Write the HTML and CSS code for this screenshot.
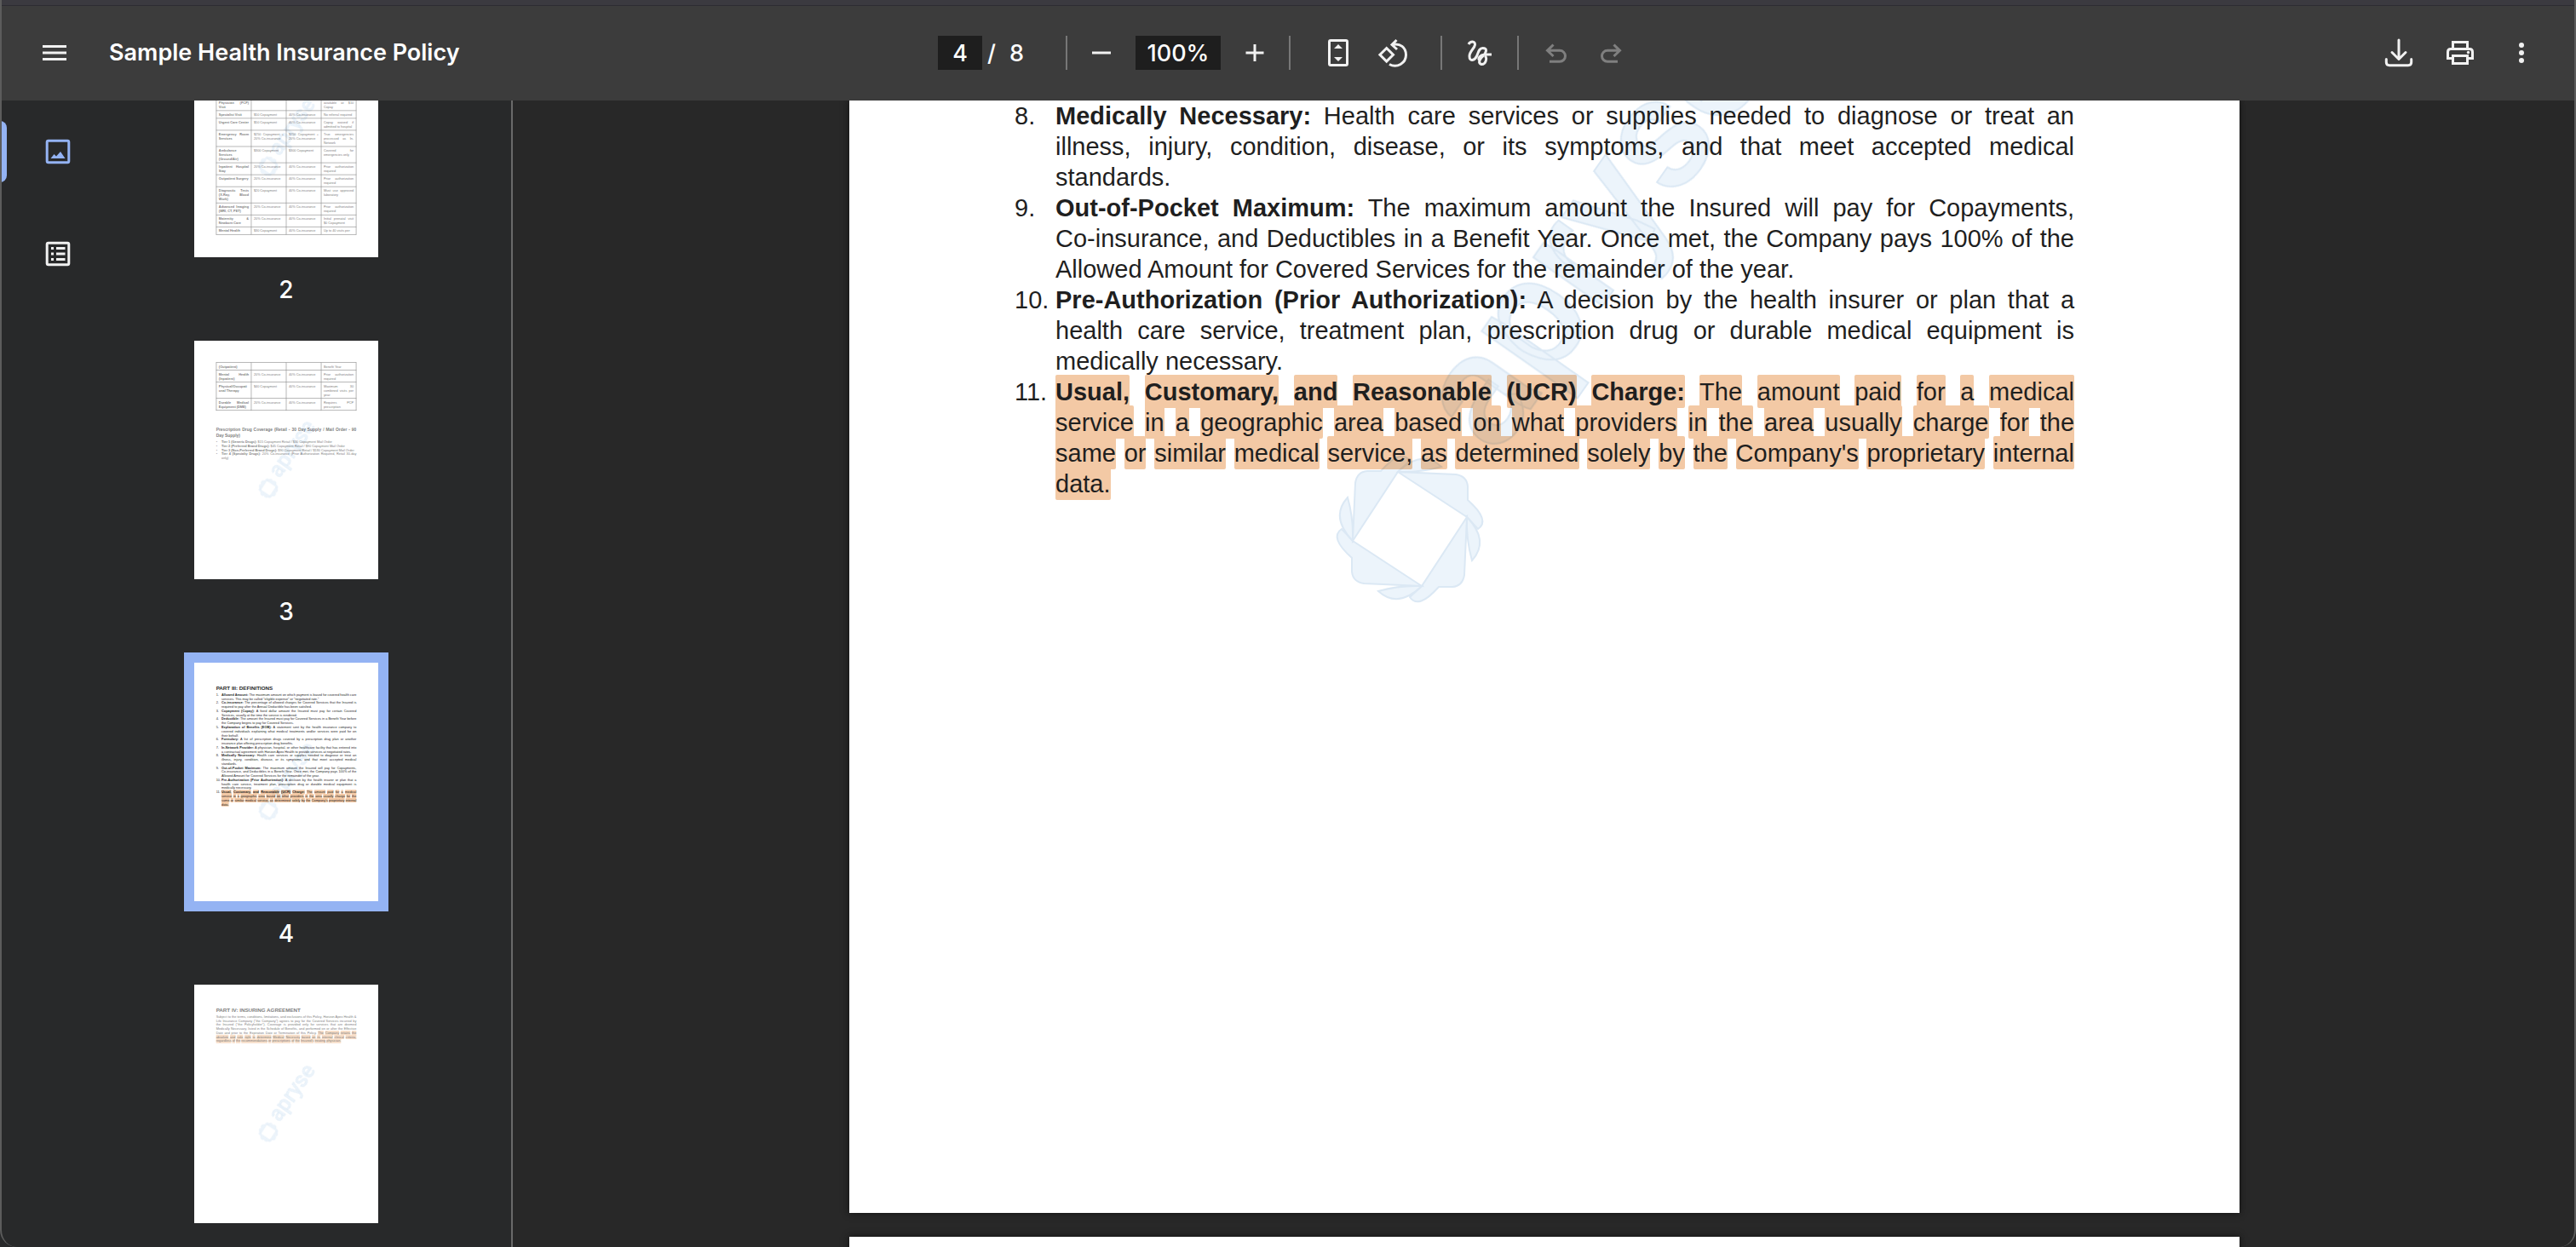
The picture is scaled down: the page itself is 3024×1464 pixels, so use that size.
FILE: index.html
```html
<!DOCTYPE html>
<html lang="en">

<head>
    <meta charset="UTF-8">
    <title>Sample Health Insurance Policy</title>
    <link rel="stylesheet" href="styles.css">
</head>

<body>
    <!-- shared watermark, drawn in page units -->
    <svg class="defs" aria-hidden="true">
        <defs>
            <g id="petal">
                <path d="M-14 -67L54 -64Q67 -62 68 -50L68 -34Q95 -10 80 0L67 -14Z" />
                <path d="M67 -14Q94 14 73 37Q66 12 67 -14Z" />
            </g>
            <g id="watermark">
                <g transform="translate(658 1309)">
                    <use href="#petal" />
                    <use href="#petal" transform="rotate(90)" />
                    <use href="#petal" transform="rotate(180)" />
                    <use href="#petal" transform="rotate(270)" />
                </g>
                <text class="mark-text" transform="translate(759 1226) rotate(-55)">apryse</text>
            </g>
        </defs>
    </svg>

    <div class="app">
        <header class="toolbar">
            <div class="start">
                <button class="btn" aria-label="Menu">
                    <svg class="icon" viewBox="0 0 40 40"><path d="M6 12.5H34M6 20H34M6 27.5H34" /></svg>
                </button>
                <h1 class="title">Sample Health Insurance Policy</h1>
            </div>
            <div class="center">
                <div class="pages">
                    <input class="field page-no" type="text" value="4" aria-label="Page number">
                    <span class="slash">/</span>
                    <span>8</span>
                </div>
                <span class="line"></span>
                <div class="zoom">
                    <button class="btn" aria-label="Zoom out">
                        <svg class="icon" viewBox="0 0 40 40"><path d="M9 20H31" /></svg>
                    </button>
                    <input class="field zoom-val" type="text" value="100%" aria-label="Zoom level">
                    <button class="btn" aria-label="Zoom in">
                        <svg class="icon" viewBox="0 0 40 40"><path d="M9.500 20H30.500M20 10V30" /></svg>
                    </button>
                </div>
                <span class="line"></span>
                <div class="view">
                    <button class="btn" aria-label="Fit to page">
                        <svg class="icon" viewBox="0 0 40 40"><rect x="9.500" y="5.500" width="21" height="29" rx="1.500" /><path class="solid" d="M20 10L25 15H15ZM20 30L25 25H15Z" /></svg>
                    </button>
                    <button class="btn" aria-label="Rotate counterclockwise">
                        <svg class="icon" viewBox="0 0 40 40"><path d="M12.700 14.500L20.500 22.300L12.700 30.100L4.900 22.300Z" /><path d="M24.500 5L19 10.500L25 16M19 10.500C29 8 35.500 14 35.500 22.500C35.500 32 25 38.500 16 33.500" /></svg>
                    </button>
                </div>
                <span class="line"></span>
                <button class="btn" aria-label="Draw">
                    <svg class="icon" viewBox="0 0 40 40"><path d="M7 10C9 6 15 6 14.500 10.500C14 15 8 18 8 24C8 31 14 29 16.500 24C18.500 20 19 14.500 23.500 14.500C30 14.500 27.500 20 24 23.500C20 27 17.500 32 22 33.500C27 34 29 27 26.500 23.500M34 22H26C20 22.500 17.500 27 20 29" /></svg>
                </button>
                <span class="line"></span>
                <button class="btn off" aria-label="Undo" disabled>
                    <svg class="icon" viewBox="0 0 40 40"><path d="M16.500 10.500L9.500 17.300L16.500 24M9.500 17.300H24A6.500 6.500 0 0 1 24 30.300H12" /></svg>
                </button>
                <button class="btn off" aria-label="Redo" disabled>
                    <svg class="icon" viewBox="0 0 40 40"><path d="M23.500 10.500L30.500 17.300L23.500 24M30.500 17.300H16A6.500 6.500 0 0 0 16 30.300H28" /></svg>
                </button>
            </div>
            <div class="end">
                <button class="btn" aria-label="Download">
                    <svg class="icon thin" viewBox="0 0 40 40"><path d="M20 5V27M12 19.500L20 27.500L28 19.500M5.300 27.500V31Q5.300 34.700 9 34.700H31Q34.700 34.700 34.700 31V27.500" /></svg>
                </button>
                <button class="btn" aria-label="Print">
                    <svg class="icon" viewBox="0 0 40 40"><path d="M11.500 15V7.500H28.500V15M11.500 26.500H5.500V19Q5.500 15.500 9 15.500H31Q34.500 15.500 34.500 19V26.500H28.500M11.500 23.500H28.500V32.500H11.500Z" /><circle class="solid" cx="29.500" cy="19.500" r="1.700" /></svg>
                </button>
                <button class="btn" aria-label="More actions">
                    <svg class="icon" viewBox="0 0 40 40"><g class="solid"><circle cx="20" cy="11" r="3" /><circle cx="20" cy="20" r="3" /><circle cx="20" cy="29" r="3" /></g></svg>
                </button>
            </div>
        </header>

        <div class="main">
            <aside class="sidebar">
                <nav class="rail">
                    <button class="tab current" aria-label="Thumbnails">
                        <svg class="icon" viewBox="0 0 40 40"><rect x="7.200" y="7.200" width="25.600" height="25.600" rx="1.500" /><path class="solid" d="M11.500 28L15.500 23L18 25.500L23 20L28.500 28Z" /></svg>
                    </button>
                    <button class="tab" aria-label="Document outline">
                        <svg class="icon" viewBox="0 0 40 40"><rect x="7.200" y="7.200" width="25.600" height="25.600" rx="1.500" /><path d="M18 13.500H28.500M18 20H28.500M18 26.500H28.500M12 13.500H15M12 20H15M12 26.500H15" /></svg>
                    </button>
                </nav>
                <div class="thumbs">
                    <div class="thumb">
                        <button class="sheet" aria-label="Page 2">
                            <svg viewBox="0 726 1632 1390">
                                <foreignObject x="0" y="726" width="1632" height="1390">
                                    <div class="paper cut">
                                        <table class="plan">
                                            <tr class="rest"><th>Physician (PCP) Visit</th><td></td><td></td><td>available at $10 Copay</td></tr>
                                            <tr><th>Specialist Visit</th><td>$50 Copayment</td><td>40% Co-insurance</td><td>No referral required</td></tr>
                                            <tr><th>Urgent Care Center</th><td>$50 Copayment</td><td>40% Co-insurance</td><td>Copay waived if admitted to hospital</td></tr>
                                            <tr><th>Emergency Room Services</th><td>$250 Copayment + 20% Co-insurance</td><td>$250 Copayment + 20% Co-insurance</td><td>True emergencies processed as In-Network</td></tr>
                                            <tr><th>Ambulance Services (Ground/Air)</th><td>$300 Copayment</td><td>$300 Copayment</td><td>Covered for emergencies only</td></tr>
                                            <tr><th>Inpatient Hospital Stay</th><td>20% Co-insurance</td><td>40% Co-insurance</td><td>Prior authorization required</td></tr>
                                            <tr><th>Outpatient Surgery</th><td>20% Co-insurance</td><td>40% Co-insurance</td><td>Prior authorization required</td></tr>
                                            <tr><th>Diagnostic Tests (X-Ray, Blood Work)</th><td>$20 Copayment</td><td>40% Co-insurance</td><td>Must use approved laboratory</td></tr>
                                            <tr><th>Advanced Imaging (MRI, CT, PET)</th><td>20% Co-insurance</td><td>40% Co-insurance</td><td>Prior authorization required</td></tr>
                                            <tr><th>Maternity &amp; Newborn Care</th><td>20% Co-insurance</td><td>40% Co-insurance</td><td>Initial prenatal visit $0 Copayment</td></tr>
                                            <tr class="split"><th>Mental Health</th><td>$30 Copayment</td><td>40% Co-insurance</td><td>Up to 40 visits per</td></tr>
                                        </table>
                                    </div>
                                </foreignObject>
                                <use class="water" href="#watermark" />
                            </svg>
                        </button>
                        <span class="no">2</span>
                    </div>
                    <div class="thumb">
                        <button class="sheet" aria-label="Page 3">
                            <svg viewBox="0 0 1632 2116">
                                <foreignObject width="1632" height="2116">
                                    <div class="paper">
                                        <table class="plan">
                                            <tr><th>(Outpatient)</th><td></td><td></td><td>Benefit Year</td></tr>
                                            <tr><th>Mental Health (Inpatient)</th><td>20% Co-insurance</td><td>40% Co-insurance</td><td>Prior authorization required</td></tr>
                                            <tr><th>Physical/Occupational Therapy</th><td>$40 Copayment</td><td>40% Co-insurance</td><td>Maximum 30 combined visits per year</td></tr>
                                            <tr><th>Durable Medical Equipment (DME)</th><td>20% Co-insurance</td><td>40% Co-insurance</td><td>Requires PCP prescription</td></tr>
                                        </table>
                                        <h3>Prescription Drug Coverage (Retail - 30 Day Supply / Mail Order - 90 Day&nbsp;Supply)</h3>
                                        <ul class="items">
                                            <li><span>•</span><p><strong>Tier 1 (Generic Drugs):</strong> $15 Copayment Retail / $30 Copayment Mail Order</p></li>
                                            <li><span>•</span><p><strong>Tier 2 (Preferred Brand Drugs):</strong> $45 Copayment Retail / $90 Copayment Mail Order</p></li>
                                            <li><span>•</span><p><strong>Tier 3 (Non-Preferred Brand Drugs):</strong> $90 Copayment Retail / $180 Copayment Mail Order</p></li>
                                            <li><span>•</span><p><strong>Tier 4 (Specialty Drugs):</strong> 20% Co-insurance (Prior Authorization Required, Retail 30-day only)</p></li>
                                        </ul>
                                    </div>
                                </foreignObject>
                                <use class="water" href="#watermark" />
                            </svg>
                        </button>
                        <span class="no">3</span>
                    </div>
                    <div class="thumb current">
                        <button class="sheet" aria-label="Page 4">
                            <svg viewBox="0 0 1632 2116">
                                <foreignObject width="1632" height="2116">
                                    <div class="paper">
                                        <h2>PART III: DEFINITIONS</h2>
                                        <ol class="items">
                                            <li><span>1.</span><p><strong>Allowed Amount:</strong> The maximum amount on which payment is based for covered health care services. This may be called "eligible expense" or "negotiated rate."</p></li>
                                            <li><span>2.</span><p><strong>Co-insurance:</strong> The percentage of allowed charges for Covered Services that the Insured is required to pay after the Annual Deductible has been satisfied.</p></li>
                                            <li><span>3.</span><p><strong>Copayment (Copay):</strong> A fixed dollar amount the Insured must pay for certain Covered Services, usually at the time the service is rendered.</p></li>
                                            <li><span>4.</span><p><strong>Deductible:</strong> The amount the Insured must pay for Covered Services in a Benefit Year before the Company begins to pay for Covered Services.</p></li>
                                            <li><span>5.</span><p><strong>Explanation of Benefits (EOB):</strong> A statement sent by the health insurance company to covered individuals explaining what medical treatments and/or services were paid for on their&nbsp;behalf.</p></li>
                                            <li><span>6.</span><p><strong>Formulary:</strong> A list of prescription drugs covered by a prescription drug plan or another insurance plan offering prescription drug benefits.</p></li>
                                            <li><span>7.</span><p><strong>In-Network Provider:</strong> A physician, hospital, or other healthcare facility that has entered into a contractual agreement with Horizon Apex Health to provide services at negotiated rates.</p></li>
                                            <li><span>8.</span><p><strong>Medically Necessary:</strong> Health care services or supplies needed to diagnose or treat an illness, injury, condition, disease, or its symptoms, and that meet accepted medical standards.</p></li>
                                            <li><span>9.</span><p><strong>Out-of-Pocket Maximum:</strong> The maximum amount the Insured will pay for Copayments, <span class="nobr">Co-insurance,</span> and Deductibles in a Benefit Year. Once met, the Company pays 100% of the Allowed Amount for Covered Services for the remainder of the year.</p></li>
                                            <li><span>10.</span><p><strong>Pre-Authorization (Prior Authorization):</strong> A decision by the health insurer or plan that a health care service, treatment plan, prescription drug or durable medical equipment is medically necessary.</p></li>
                                            <li><span>11.</span><p><span class="full"><strong class="hl">Usual, Customary, and Reasonable (UCR) Charge:</strong> <span class="hl">The amount paid for a medical</span></span> <span class="hl full">service in a geographic area based on what providers in the area usually charge for the</span> <span class="hl full">same or similar medical service, as determined solely by the Company's proprietary internal</span> <span class="hl">data.</span></p></li>
                                        </ol>
                                    </div>
                                </foreignObject>
                                <use class="water" href="#watermark" />
                            </svg>
                        </button>
                        <span class="no">4</span>
                    </div>
                    <div class="thumb">
                        <button class="sheet" aria-label="Page 5">
                            <svg viewBox="0 0 1632 2116">
                                <foreignObject width="1632" height="2116">
                                    <div class="paper">
                                        <h2>PART IV: INSURING AGREEMENT</h2>
                                        <p>Subject to the terms, conditions, limitations, and exclusions of this Policy, Horizon Apex Health &amp; Life Insurance Company ("the Company") agrees to pay for the Covered Services incurred by the Insured ("the Policyholder"). Coverage is provided only for services that are deemed Medically Necessary, listed in the Schedule of Benefits, and performed on or after the Effective Date and prior to the Expiration Date or Termination of this Policy. <span class="hl">The Company retains the absolute and sole right to determine Medical Necessity based on its internal clinical criteria, regardless of the recommendations or prescriptions of the Insured's treating physician.</span></p>
                                    </div>
                                </foreignObject>
                                <use class="water" href="#watermark" />
                            </svg>
                        </button>
                    </div>
                </div>
            </aside>

            <main class="viewer">
                <article class="page">
                    <ol class="items">
                        <li><span>8.</span><p><strong>Medically Necessary:</strong> Health care services or supplies needed to diagnose or treat an illness, injury, condition, disease, or its symptoms, and that meet accepted medical standards.</p></li>
                        <li><span>9.</span><p><strong>Out-of-Pocket Maximum:</strong> The maximum amount the Insured will pay for Copayments, <span class="nobr">Co-insurance,</span> and Deductibles in a Benefit Year. Once met, the Company pays 100% of the Allowed Amount for Covered Services for the remainder of the year.</p></li>
                        <li><span>10.</span><p><strong>Pre-Authorization (Prior Authorization):</strong> A decision by the health insurer or plan that a health care service, treatment plan, prescription drug or durable medical equipment is medically necessary.</p></li>
                        <li><span>11.</span><p><span class="full"><strong class="hl">Usual, Customary, and Reasonable (UCR) Charge:</strong> <span class="hl">The amount paid for a medical</span></span> <span class="hl full">service in a geographic area based on what providers in the area usually charge for the</span> <span class="hl full">same or similar medical service, as determined solely by the Company's proprietary internal</span> <span class="hl">data.</span></p></li>
                    </ol>
                    <svg class="stamp" viewBox="0 806 1632 1306" aria-hidden="true"><use class="water" href="#watermark" /></svg>
                </article>
                <article class="page next"></article>
            </main>
        </div>
    </div>

    <script>
        // highlight word by word, the spaces stay white
        var hls = document.querySelectorAll('.hl');
        for (var i = 0; i < hls.length; i++) {
            var words = hls[i].textContent.split(' ');
            hls[i].innerHTML = '<mark>' + words.join('</mark> <mark>') + '</mark>';
        }
    </script>
</body>

</html>
```
FILE: styles.css
```css
* {
    box-sizing: border-box;
    margin: 0;
    padding: 0;
}

body {
    background: #282828;
    font-family: Inter, Roboto, sans-serif;
    font-size: 28px;
    color: #fff;
}

button {
    border: 0;
    background: none;
    color: inherit;
    font: inherit;
    cursor: pointer;
}

.defs {
    position: absolute;
    width: 0;
    height: 0;
}

.app {
    height: 100vh;
    display: flex;
    flex-direction: column;
    overflow: hidden;
}

/* window frame */
.app::after {
    content: '';
    position: absolute;
    inset: 0;
    border: 2px solid #5c5c5c;
    border-top: 0;
    border-bottom: 0;
    border-radius: 0 0 20px 20px;
    pointer-events: none;
}

/* toolbar */
.toolbar {
    display: grid;
    grid-template-columns: 1fr auto 1fr;
    align-items: center;
    height: 118px;
    padding: 0 32px;
    border-top: 6px solid #3b3a40;
    background: #3c3c3c;
    box-shadow: inset 0 1px #2d2c32;
    flex: none;
}

.start,
.center,
.end,
.pages,
.zoom,
.view {
    display: flex;
    align-items: center;
}

.start {
    gap: 32px;
}

.end {
    justify-content: flex-end;
    gap: 8px;
}

.title {
    font-size: 27px;
    font-weight: 600;
    line-height: 40px;
    white-space: nowrap;
}

.btn {
    display: flex;
    align-items: center;
    justify-content: center;
    width: 64px;
    height: 64px;
}

.off {
    color: #7f7f7f;
}

.icon {
    width: 40px;
    height: 40px;
    fill: none;
    stroke: currentColor;
    stroke-width: 3;
    color: #f1f1f1;
}

.off .icon {
    color: #7f7f7f;
}

.icon.thin {
    stroke-linecap: round;
    stroke-linejoin: round;
}

.solid {
    fill: currentColor;
    stroke: none;
}

.field {
    height: 40px;
    border: 0;
    background: #1e1e1e;
    color: #fff;
    font: inherit;
    font-size: 27px;
    font-weight: 500;
    text-align: center;
}

.page-no {
    width: 52px;
}

.zoom-val {
    width: 100px;
}

.pages {
    width: 150px;
    font-size: 27px;
    font-weight: 500;
}

.slash {
    margin: 0 16px 0 6px;
}

.zoom {
    gap: 8px;
    margin: 0 8px;
}

.view {
    margin: 0 12px 0 24px;
}

.line {
    width: 2px;
    height: 40px;
    margin: 0 12px;
    background: #777;
}

.pages + .line,
.zoom + .line {
    margin: 0;
}

/* sidebar */
.main {
    display: flex;
    flex: 1;
    min-height: 0;
}

.sidebar {
    display: flex;
    flex: none;
    width: 602px;
    border-right: 2px solid #6a6a6a;
    background: #28292a;
}

.rail {
    display: flex;
    flex-direction: column;
    gap: 48px;
    width: 136px;
    padding-top: 24px;
}

.tab {
    position: relative;
    display: flex;
    align-items: center;
    justify-content: center;
    height: 72px;
}

.tab.current .icon {
    color: #94b3f3;
}

.tab.current::before {
    content: '';
    position: absolute;
    left: 0;
    width: 8px;
    height: 72px;
    border-radius: 0 8px 8px 0;
    background: #94b3f3;
}

.thumbs {
    width: 400px;
    overflow: hidden;
}

.thumb {
    display: flex;
    flex-direction: column;
    align-items: center;
    gap: 24px;
    margin-bottom: 46px;
}

.sheet {
    width: 216px;
    background: #fff;
}

.sheet svg {
    display: block;
    width: 100%;
}

.thumb foreignObject {
    opacity: .6;
}

.thumb.current .sheet {
    box-shadow: 0 0 0 12px #94b3f3;
}

.thumb.current foreignObject {
    opacity: 1;
}

.no {
    line-height: 28px;
    font-weight: 500;
}

/* document */
.paper,
.page {
    font-family: "Liberation Sans", Arial, sans-serif;
    font-size: 29px;
    line-height: 36px;
    text-align: justify;
    color: #1f1f1f;
}

.paper {
    padding: 192px 194px;
}

.paper.cut {
    padding-top: 0;
}

.paper h2 {
    margin-bottom: 6px;
    font-size: 47px;
    line-height: 68px;
    text-align: left;
}

.paper h3 {
    margin: 148px 0 16px;
    font-size: 37px;
    line-height: 48px;
}

.items {
    list-style: none;
}

.items li {
    display: grid;
    grid-template-columns: 48px 1fr;
}

.nobr {
    white-space: nowrap;
}

/* one line stretched over the whole column */
.full {
    display: block;
    text-align-last: justify;
}

mark {
    padding: 4px 0 3px;
    border-radius: 2px;
    background: #f3c9a5;
    color: inherit;
}

.plan {
    width: 100%;
    table-layout: fixed;
    border-collapse: collapse;
    line-height: 38px;
}

.plan th,
.plan td {
    padding: 14px 20px 12px;
    border: 4px solid #222;
    text-align: justify;
    vertical-align: top;
    overflow-wrap: break-word;
}

.plan .rest th,
.plan .rest td {
    padding-top: 0;
    border-top: 0;
}

.viewer {
    flex: 1;
    display: flex;
    flex-direction: column;
    align-items: center;
    gap: 28px;
    min-width: 0;
    overflow: hidden;
    background: #282828;
}

.page {
    position: relative;
    flex: none;
    width: 1632px;
    min-height: 1306px;
    padding: 0 194px;
    background: #fff;
    box-shadow: 0 0 8px #111;
}

.stamp {
    position: absolute;
    top: 0;
    left: 0;
    width: 100%;
    mix-blend-mode: multiply;
    pointer-events: none;
}

.water {
    fill: #ecf4fb;
    stroke: #dbe8f4;
    stroke-width: 2;
    mix-blend-mode: multiply;
}

.mark-text {
    font-family: Roboto, sans-serif;
    font-size: 188px;
    font-weight: 500;
}
```
